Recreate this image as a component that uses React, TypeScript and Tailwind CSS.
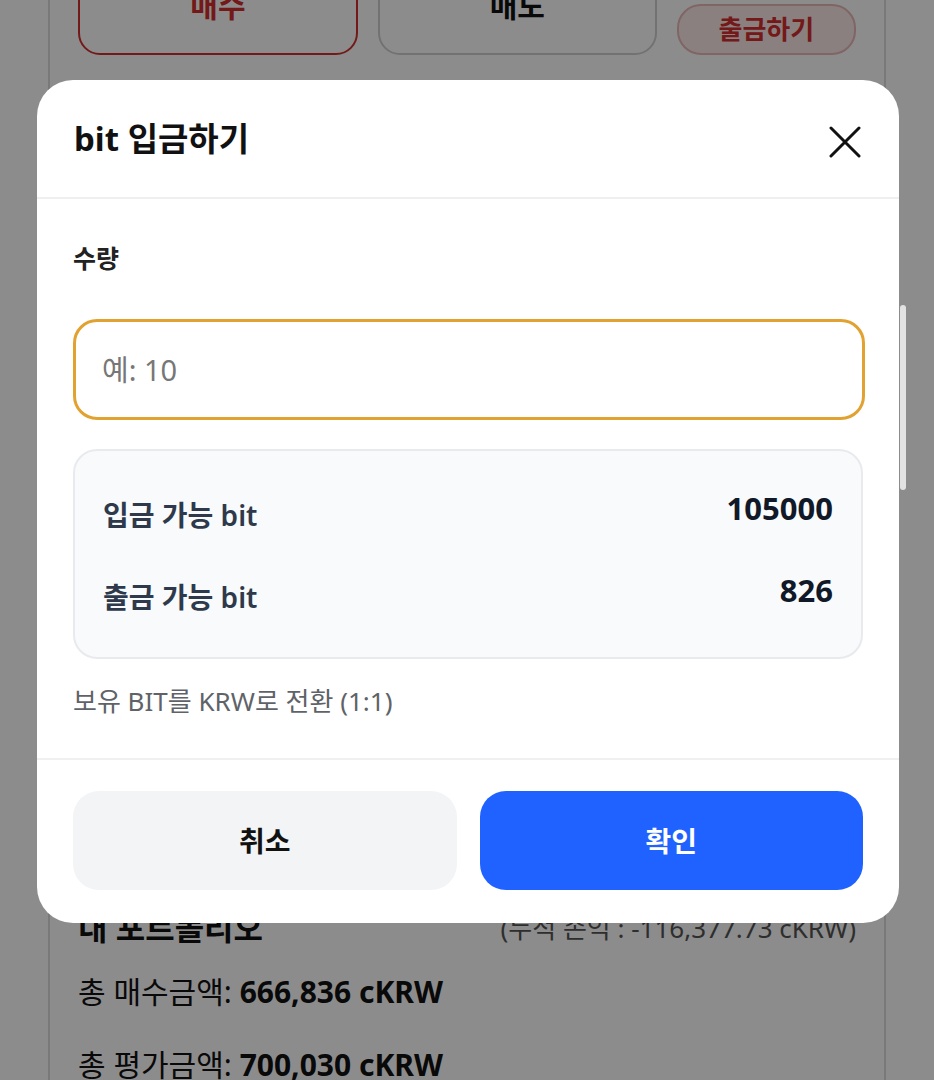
export default function App() {
  return (
    <div className="relative h-[1080px] w-full overflow-hidden bg-white font-['Noto_Sans','Noto_Sans_CJK_KR',sans-serif]">
      {/* Page behind the modal */}
      <div className="mx-[48px] flex h-full flex-col border-x-2 border-[#dcdcdc] px-[28px]">
        {/* Trade buttons row */}
        <div className="-mt-[45px] flex items-end gap-[20px]">
          <button className="flex h-[100px] w-[281px] items-center justify-center rounded-[22px] border-2 border-[#d32f2f] text-[30px] font-bold text-[#d32f2f]">
            매수
          </button>
          <button className="flex h-[100px] w-[280px] items-center justify-center rounded-[22px] border-2 border-[#cfcfcf] text-[30px] font-bold text-[#111]">
            매도
          </button>
          <button className="flex h-[51px] w-[180px] items-center justify-center rounded-[24px] border-2 border-[#eab8b8] bg-[#fde9e9] text-[26px] font-bold text-[#d32f2f]">
            출금하기
          </button>
        </div>

        {/* Portfolio */}
        <div className="mt-[853px] flex items-center justify-between leading-[40px]">
          <span className="text-[32px] font-bold text-[#111]">내 포트폴리오</span>
          <span className="text-[26px] text-[#555]">(누적 손익 : -116,377.73 cKRW)</span>
        </div>
        <p className="mt-[24px] text-[30px] leading-[40px] text-[#111]">
          총 매수금액: <span className="font-bold">666,836 cKRW</span>
        </p>
        <p className="mt-[33px] text-[30px] leading-[40px] text-[#111]">
          총 평가금액: <span className="font-bold">700,030 cKRW</span>
        </p>
      </div>

      {/* Overlay */}
      <div className="absolute inset-0 bg-black/45 pl-[37px] pt-[80px]">
        <div className="w-[862px] overflow-hidden rounded-[36px] bg-white">
          {/* Header */}
          <div className="flex h-[119px] items-center justify-between border-b-2 border-[#efefef] pl-[37px] pr-[38px]">
            <h2 className="text-[33px] font-bold text-[#111]">bit 입금하기</h2>
            <svg width="32" height="32" viewBox="0 0 32 32" className="mt-[6px]">
              <path d="M2 2 L30 30 M30 2 L2 30" stroke="#111" strokeWidth="3" strokeLinecap="round" />
            </svg>
          </div>

          {/* Body */}
          <div className="flex flex-col px-[36px] pb-[41px] pt-[41px]">
            <label className="text-[25px] font-bold leading-[36px] text-[#222]">수량</label>
            <input
              placeholder="예: 10"
              className="mt-[43px] h-[101px] w-[792px] rounded-[24px] border-[3px] border-[#e2a232] px-[26px] text-[29px] text-[#111] outline-none placeholder:text-[#777]"
            />

            <div className="mt-[29px] flex flex-col gap-[32px] rounded-[24px] border-2 border-[#e8eaee] bg-[#f8fafc] px-[28px] pb-[35px] pt-[39px]">
              <div className="flex items-start justify-between">
                <span className="text-[28px] font-semibold leading-[50px] text-[#2e3a4b]">입금 가능 bit</span>
                <span className="text-[31px] font-bold leading-[36px] text-[#111827]">105000</span>
              </div>
              <div className="flex items-start justify-between">
                <span className="text-[28px] font-semibold leading-[50px] text-[#2e3a4b]">출금 가능 bit</span>
                <span className="text-[31px] font-bold leading-[36px] text-[#111827]">826</span>
              </div>
            </div>

            <p className="mt-[26px] text-[26px] leading-[32px] text-[#5f6368]">보유 BIT를 KRW로 전환 (1:1)</p>
          </div>

          {/* Footer */}
          <div className="flex gap-[23px] border-t-2 border-[#f0f0f0] px-[36px] pb-[33px] pt-[31px]">
            <button className="flex h-[99px] flex-1 items-center justify-center rounded-[26px] bg-[#f2f4f6] text-[28px] font-bold text-[#111]">
              취소
            </button>
            <button className="flex h-[99px] flex-1 items-center justify-center rounded-[26px] bg-[#1f62ff] text-[28px] font-bold text-white">
              확인
            </button>
          </div>
        </div>
      </div>

      {/* Scroll indicator */}
      <div className="absolute left-[900px] top-[305px] h-[185px] w-[6px] rounded-full bg-[#e2e2e2]" />
    </div>
  )
}
